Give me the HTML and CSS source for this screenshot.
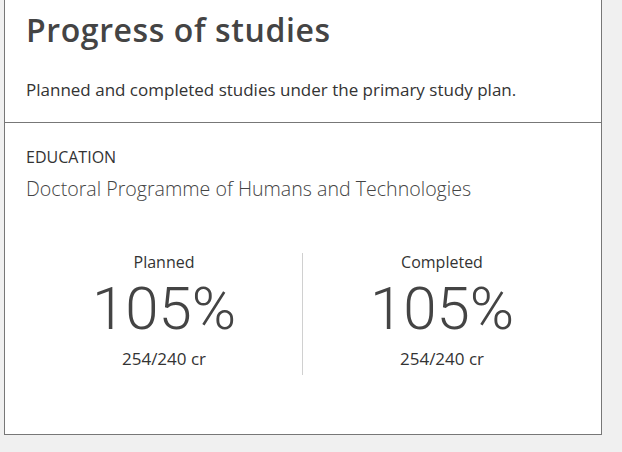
FILE: index.html
```html
<!DOCTYPE html>
<html lang="en">
<head>
<meta charset="utf-8">
<title>Progress of studies</title>
<link rel="stylesheet" href="styles.css">
</head>
<body>
<section class="card">
  <header class="card-header">
    <h1 class="title">Progress of studies</h1>
    <p class="subtitle">Planned and completed studies under the primary study plan.</p>
  </header>
  <div class="card-body">
    <div class="label">EDUCATION</div>
    <div class="programme">Doctoral Programme of Humans and Technologies</div>
    <div class="stats">
      <div class="stat">
        <div class="stat-label">Planned</div>
        <div class="stat-value">105%</div>
        <div class="stat-credits">254/240 cr</div>
      </div>
      <div class="stat stat-second">
        <div class="stat-label">Completed</div>
        <div class="stat-value">105%</div>
        <div class="stat-credits">254/240 cr</div>
      </div>
    </div>
  </div>
</section>
</body>
</html>
```
FILE: styles.css
```css
html, body {
  margin: 0;
  padding: 0;
  background: #f0f0f0;
}

body {
  font-family: "Open Sans", "Liberation Sans", sans-serif;
  color: #444;
}

.card {
  margin-left: 4px;
  width: 596px;
  background: #fff;
  border: 1px solid #777;
  border-top: none;
}

.card-header {
  padding: 10px 21px 20px;
  border-bottom: 1px solid #777;
}

.title {
  margin: 0;
  font-size: 32px;
  line-height: 40px;
  font-weight: 600;
  letter-spacing: 0.6px;
  color: #444;
}

.subtitle {
  margin: 28px 0 0;
  font-size: 17px;
  line-height: 24px;
  color: #333;
}

.card-body {
  padding: 22px 20px 59px 21px;
}

.label {
  font-size: 16px;
  line-height: 24px;
  color: #333;
}

.programme {
  margin-top: 6px;
  font-size: 19.6px;
  line-height: 28px;
  font-weight: 300;
  color: #444;
}

.stats {
  margin-top: 50px;
  display: grid;
  grid-template-columns: 276px 1fr;
}

.stat {
  text-align: center;
  padding-bottom: 5px;
}

.stat-second {
  border-left: 1px solid #d0d0d0;
}

.stat-label {
  font-size: 16px;
  line-height: 18px;
  color: #333;
}

.stat-value {
  margin-top: 8px;
  font-family: "Roboto", "Open Sans", sans-serif;
  font-weight: 300;
  font-size: 60px;
  line-height: 60px;
  color: #444;
}

.stat-credits {
  margin-top: 9px;
  font-size: 17px;
  line-height: 22px;
  color: #333;
}
```
